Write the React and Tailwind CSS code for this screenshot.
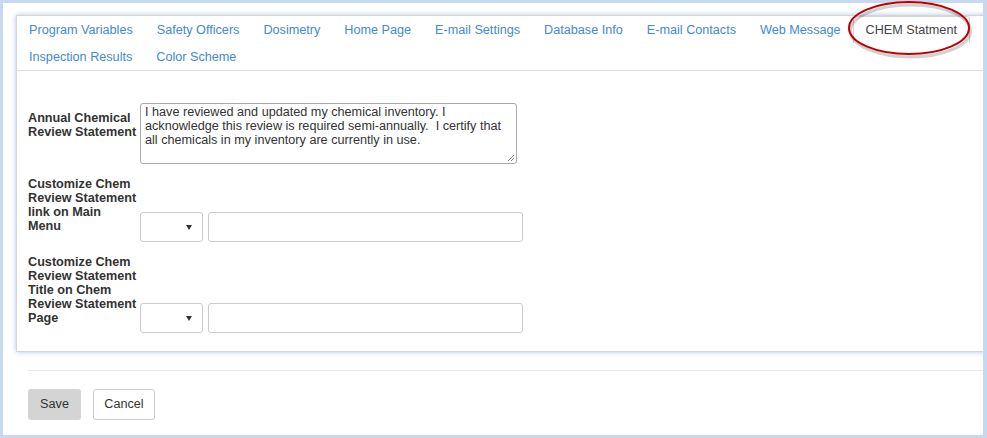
import React from "react";

const tabs = [
  "Program Variables",
  "Safety Officers",
  "Dosimetry",
  "Home Page",
  "E-mail Settings",
  "Database Info",
  "E-mail Contacts",
  "Web Message",
  "CHEM Statment",
  "Inspection Results",
  "Color Scheme",
];

function SelectBox() {
  return (
    <div className="w-[63px] h-[30px] border border-[#ccc] rounded-[3px] bg-white flex items-center justify-end pr-[10px]">
      <span className="w-0 h-0 border-l-[3px] border-r-[3px] border-t-[5px] border-l-transparent border-r-transparent border-t-[#333]"></span>
    </div>
  );
}

function TextBox() {
  return (
    <div className="w-[315px] h-[30px] border border-[#ccc] rounded-[3px] bg-white ml-[5px]"></div>
  );
}

export default function App() {
  return (
    <div
      className="relative w-[987px] h-[438px] bg-[#c6d9f1] pt-[3px] pl-[3px] pr-[4px] pb-[3px] text-[12.65px] text-[#333]"
      style={{ fontFamily: '"Liberation Sans", Arial, sans-serif' }}
    >
      <div className="h-full bg-white overflow-hidden pt-[12px] pl-[13px]">

        {/* Settings panel */}
        <div className="w-[990px] h-[337px] border border-[#d6d6d6] bg-white shadow-[0_0_5px_#a9c8ee]">

          {/* Tabs */}
          <ul className="flex flex-wrap w-[976px] border-b border-[#ddd]">
            {tabs.map((t) =>
              t === "CHEM Statment" ? (
                <li
                  key={t}
                  className="h-[27px] pt-[1px] leading-[25px] px-[12px] border border-b-0 border-[#d4d4d4] rounded-t-[3px] text-[#444]"
                >
                  {t}
                </li>
              ) : (
                <li key={t} className="h-[27px] pt-[2px] leading-[25px] px-[12px] text-[#4389d4]">
                  {t}
                </li>
              )
            )}
          </ul>

          {/* Form */}
          <div className="pl-[11px] pt-[32px]">
            <div className="flex items-start">
              <div className="w-[112px] pt-[8px] font-bold leading-[14px]">
                Annual Chemical<br />Review Statement
              </div>
              <div className="relative w-[377px] h-[61px] border border-[#aaa] rounded-[3px] pl-[4px] pt-[1px] leading-[14px]">
                I have reviewed and updated my chemical inventory. I<br />
                acknowledge this review is required semi-annually.&nbsp; I certify that<br />
                all chemicals in my inventory are currently in use.
                <svg className="absolute right-[2px] bottom-[2px]" width="7" height="7" viewBox="0 0 7 7">
                  <path d="M1 7 L7 1 M4 7 L7 4" stroke="#888" strokeWidth="1" />
                </svg>
              </div>
            </div>

            <div className="flex items-end mt-[13px]">
              <div className="w-[112px] mb-[9px] font-bold leading-[14px]">
                Customize Chem<br />Review Statement<br />link on Main<br />Menu
              </div>
              <SelectBox />
              <TextBox />
            </div>

            <div className="flex items-end mt-[13px]">
              <div className="w-[112px] mb-[8px] font-bold leading-[14px]">
                Customize Chem<br />Review Statement<br />Title on Chem<br />Review Statement<br />Page
              </div>
              <SelectBox />
              <TextBox />
            </div>
          </div>
        </div>

        {/* Footer */}
        <div className="pl-[12px]">
          <div className="mt-[18px] border-t border-[#e8e8e8]"></div>
          <div className="flex gap-[12px] mt-[18px]">
            <button className="w-[53px] h-[31px] rounded-[3px] bg-[#d4d4d4] text-[#333]">
              Save
            </button>
            <button className="w-[62px] h-[31px] rounded-[3px] border border-[#ccc] bg-white text-[#333]">
              Cancel
            </button>
          </div>
        </div>
      </div>

      {/* Red annotation ellipse */}
      <svg
        className="absolute left-[846px] top-0 pointer-events-none"
        width="128"
        height="60"
        viewBox="0 0 128 60"
      >
        <ellipse cx="63" cy="29" rx="60" ry="26" fill="none" stroke="rgba(0,0,0,0.18)" strokeWidth="3" transform="translate(1.5 2)" />
        <ellipse cx="63" cy="28" rx="60" ry="26" fill="none" stroke="#c00000" strokeWidth="2" />
      </svg>
    </div>
  );
}
